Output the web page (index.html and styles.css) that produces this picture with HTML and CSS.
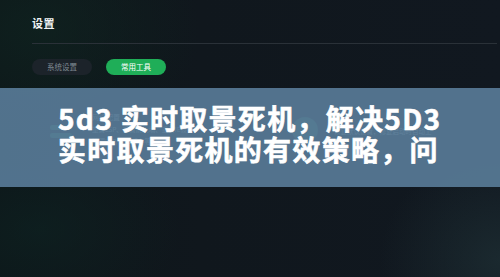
FILE: index.html
```html
<!DOCTYPE html>
<html lang="zh">
<head>
<meta charset="utf-8">
<link rel="stylesheet" href="styles.css">
</head>
<body>
<div class="page">
  <div class="settings">
    <h1 class="title">设置</h1>
    <div class="divider"></div>
    <div class="tabs">
      <span class="tab">系统设置</span>
      <span class="tab tab-active">常用工具</span>
    </div>
    <div class="tools">
      <div class="tool">
        <div class="tool-icons"><span class="ic"></span><span class="ic"></span></div>
        <div class="tool-text">
          <div class="tool-name">网络配置</div>
          <div class="tool-desc">重置LSP、重置防火墙、重置IE设置</div>
          <div class="tool-desc">清理LSP/DNS缓存等</div>
        </div>
      </div>
      <div class="tool tool-right">
        <span class="dot"></span>
        <div class="tool-text">
          <div class="tool-desc">恢复默认设置，修复启动时自动上</div>
        </div>
      </div>
    </div>
  </div>
  <div class="banner">
    <p class="headline">5d3 实时取景死机，解决5D3<br>实时取景死机的有效策略，问</p>
  </div>
</div>
</body>
</html>
```

FILE: styles.css
```css
* { box-sizing: border-box; margin: 0; padding: 0; }
html, body { width: 500px; height: 277px; overflow: hidden; }
body {
  font-family: "Noto Sans CJK SC", "Noto Sans", sans-serif;
  background: #10161d;
}
.page {
  position: relative;
  width: 500px;
  height: 277px;
  background:
    radial-gradient(ellipse 160px 120px at 40px 30px, rgba(16, 40, 34, 0.55), transparent),
    radial-gradient(ellipse 140px 90px at 40px 230px, rgba(14, 38, 36, 0.5), transparent),
    radial-gradient(ellipse 120px 110px at 500px 260px, rgba(36, 58, 62, 0.5), transparent),
    linear-gradient(90deg, #0d1619 0%, #10171d 40%, #111820 100%);
}
.settings { padding: 15px 3px 0 32px; }
.title {
  font-size: 11px;
  font-weight: 700;
  color: #f1f4f5;
  line-height: 16px;
  letter-spacing: 0.5px;
}
.divider {
  height: 1px;
  background: #2a3138;
  margin-top: 12px;
}
.tabs {
  display: flex;
  gap: 14px;
  margin-top: 15px;
}
.tab {
  width: 60px;
  height: 16px;
  border-radius: 8px;
  background: #1c232a;
  color: #7f8a93;
  font-size: 7.5px;
  line-height: 16px;
  text-align: center;
}
.tab-active {
  background: #1fae58;
  color: #ffffff;
}
.tools {
  display: flex;
  margin-top: 38px;
}
.tool { display: flex; gap: 20px; width: 260px; padding-left: 18px; }
.tool-icons { display: flex; flex-direction: column; gap: 3px; margin-top: 12px; }
.ic { width: 22px; height: 5px; border-radius: 2px; background: #2c8a68; }
.tool-name { font-size: 7px; color: #c9d5dd; line-height: 9px; }
.tool-desc { font-size: 6.5px; color: #c9d5dd; line-height: 10px; margin-top: 2px; }
.tool-right { width: 200px; padding-left: 0; gap: 16px; align-items: center; }
.dot { width: 26px; height: 26px; border-radius: 50%; background: #2a7a62; }
.banner {
  position: absolute;
  left: 0;
  top: 88px;
  width: 500px;
  height: 99px;
  background: rgba(87, 122, 150, 0.93);
  padding: 15px 0 0 58px;
}
.headline {
  font-size: 28px;
  font-weight: 700;
  color: #ffffff;
  line-height: 31px;
  letter-spacing: 1.3px;
  white-space: nowrap;
  -webkit-text-stroke: 0.6px #ffffff;
}
```
